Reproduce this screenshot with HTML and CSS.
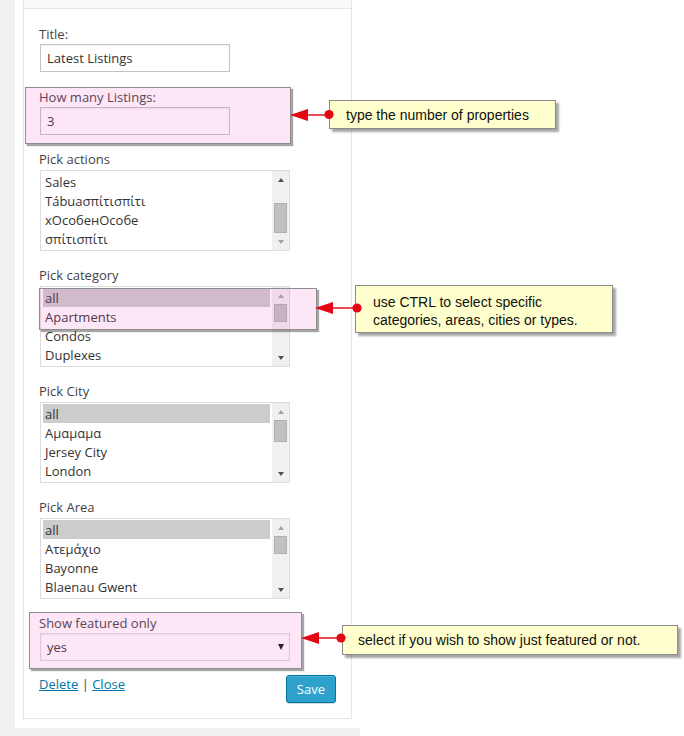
FILE: index.html
```html
<!DOCTYPE html>
<html lang="en">
<head>
<meta charset="utf-8">
<title>Latest Listings widget</title>
<link rel="stylesheet" href="styles.css">
</head>
<body>
<div class="page">
  <div class="sidebar">
    <div class="panel">
      <div class="widget">
        <div class="widget-top"></div>
        <div class="widget-inside">
          <div class="field">
            <label class="lbl">Title:</label>
            <div class="input input-short">Latest Listings</div>
          </div>
          <div class="field">
            <label class="lbl">How many Listings:</label>
            <div class="input input-short">3</div>
          </div>
          <div class="field-list">
            <label class="lbl">Pick actions</label>
            <div class="listbox">
              <div class="items">
                <div class="item">Sales</div>
                <div class="item">Tábuaσπίτισπίτι</div>
                <div class="item">xОсобенОсобе</div>
                <div class="item">σπίτισπίτι</div>
              </div>
              <div class="sb">
                <div class="sb-btn"><span class="tri-up"></span></div>
                <div class="sb-track"><div class="thumb thumb-bottom"></div></div>
                <div class="sb-btn"><span class="tri-down off"></span></div>
              </div>
            </div>
          </div>
          <div class="field-list">
            <label class="lbl">Pick category</label>
            <div class="listbox">
              <div class="items">
                <div class="item sel">all</div>
                <div class="item">Apartments</div>
                <div class="item">Condos</div>
                <div class="item">Duplexes</div>
              </div>
              <div class="sb">
                <div class="sb-btn"><span class="tri-up off"></span></div>
                <div class="sb-track"><div class="thumb thumb-s"></div></div>
                <div class="sb-btn"><span class="tri-down"></span></div>
              </div>
            </div>
          </div>
          <div class="field-list">
            <label class="lbl">Pick City</label>
            <div class="listbox">
              <div class="items">
                <div class="item sel">all</div>
                <div class="item">Αμαμαμα</div>
                <div class="item">Jersey City</div>
                <div class="item">London</div>
              </div>
              <div class="sb">
                <div class="sb-btn"><span class="tri-up off"></span></div>
                <div class="sb-track"><div class="thumb thumb-m"></div></div>
                <div class="sb-btn"><span class="tri-down"></span></div>
              </div>
            </div>
          </div>
          <div class="field-list">
            <label class="lbl">Pick Area</label>
            <div class="listbox">
              <div class="items">
                <div class="item sel">all</div>
                <div class="item">Ατεμάχιο</div>
                <div class="item">Bayonne</div>
                <div class="item">Blaenau Gwent</div>
              </div>
              <div class="sb">
                <div class="sb-btn"><span class="tri-up off"></span></div>
                <div class="sb-track"><div class="thumb thumb-s"></div></div>
                <div class="sb-btn"><span class="tri-down"></span></div>
              </div>
            </div>
          </div>
          <div class="field field-last">
            <label class="lbl">Show featured only</label>
            <div class="input select">yes<span class="caret"></span></div>
          </div>
          <div class="actions">
            <div class="links"><a href="#" class="link">Delete</a> | <a href="#" class="link">Close</a></div>
            <button class="save" type="button">Save</button>
          </div>
        </div>
      </div>
    </div>
  </div>

  <div class="hl hl-1"></div>
  <div class="hl hl-2"></div>
  <div class="hl hl-3"></div>

  <div class="note note-1">type the number of properties</div>
  <svg class="pointer ptr-1" width="48" height="20" viewBox="0 0 48 20">
    <line x1="18" y1="10" x2="41" y2="10" stroke="#e8202a" stroke-width="1.6"/>
    <polygon points="2,10 20,4 20,16" fill="#e30613"/>
    <circle cx="41" cy="9.5" r="4.6" fill="#e30613"/>
  </svg>

  <div class="note note-2">use CTRL to select specific<br>categories, areas, cities or types.</div>
  <svg class="pointer ptr-2" width="50" height="20" viewBox="0 0 50 20">
    <line x1="18" y1="10" x2="44" y2="10" stroke="#e8202a" stroke-width="1.6"/>
    <polygon points="2,10 20,4 20,16" fill="#e30613"/>
    <circle cx="44" cy="10" r="4.6" fill="#e30613"/>
  </svg>

  <div class="note note-3">select if you wish to show just featured or not.</div>
  <svg class="pointer ptr-3" width="48" height="20" viewBox="0 0 48 20">
    <line x1="18" y1="10" x2="42" y2="10" stroke="#e8202a" stroke-width="1.6"/>
    <polygon points="2,10 20,4 20,16" fill="#e30613"/>
    <circle cx="42" cy="10" r="4.6" fill="#e30613"/>
  </svg>
</div>
</body>
</html>
```

FILE: styles.css
```css
* { box-sizing: border-box; }

html, body {
  margin: 0;
  padding: 0;
  background: #ffffff;
}

.page {
  position: relative;
  width: 684px;
  height: 736px;
  overflow: hidden;
  font-family: "Open Sans", "Noto Sans", sans-serif;
  font-size: 13px;
  color: #444;
}

.sidebar {
  width: 360px;
  height: 736px;
  background: #f1f1f1;
  padding: 0 0 7px 15px;
}

.panel {
  background: #ffffff;
  padding: 0 8px 9px 8px;
}

.widget {
  border: 1px solid #e5e5e5;
  border-top: none;
  background: #fff;
}

.widget-top {
  height: 9px;
  background: #f9f9f9;
  border-bottom: 1px solid #e5e5e5;
}

.widget-inside {
  padding: 16px 15px 15px 15px;
}

.lbl {
  display: block;
  line-height: 18px;
  color: #444;
  margin-bottom: 1px;
}

.field { margin-bottom: 16px; }
.field + .field-list { margin-top: -1px; }
.field-last { margin-bottom: 0; }

.field-list { margin-bottom: 15px; }
.field-list .lbl { margin-bottom: 2px; }

.input {
  margin-left: 1px;
  height: 28px;
  border: 1px solid #c4c4c4;
  background: #fff;
  box-shadow: inset 0 1px 2px rgba(0,0,0,0.07);
  color: #333;
  line-height: 26px;
  padding-left: 6px;
}

.input-short { width: 190px; }

.select {
  width: 250px;
  position: relative;
  border-color: #dcdcdc;
  display: flex;
  align-items: center;
  justify-content: space-between;
  padding-right: 5px;
}

.caret {
  width: 0;
  height: 0;
  border-left: 3.5px solid transparent;
  border-right: 3.5px solid transparent;
  border-top: 6px solid #111;
}

.listbox {
  margin-left: 1px;
  width: 250px;
  height: 81px;
  border: 1px solid #dddddd;
  background: #fff;
  display: flex;
}

.items {
  flex: 1;
  padding: 1px 2px 0 2px;
  overflow: hidden;
}

.item {
  height: 19px;
  line-height: 20px;
  padding-left: 2px;
  color: #333;
  white-space: nowrap;
}

.item.sel { background: #cccccc; }

.sb {
  width: 17px;
  background: #f0f0f0;
  display: flex;
  flex-direction: column;
}

.sb-btn {
  height: 17px;
  display: flex;
  align-items: center;
  justify-content: center;
  padding-left: 1px;
}

.sb-track {
  flex: 1;
  padding-left: 2px;
}

.thumb {
  width: 13px;
  background: #c1c1c1;
  border: 1px solid #b0b0b0;
}

.thumb-bottom { margin-top: 15px; height: 30px; }
.thumb-s { height: 18px; }
.thumb-m { height: 22px; }

.tri-up, .tri-down {
  width: 0;
  height: 0;
  border-left: 3.5px solid transparent;
  border-right: 3.5px solid transparent;
}
.tri-up { border-bottom: 4px solid #505050; }
.tri-down { border-top: 4px solid #505050; }
.tri-up.off { border-bottom-color: #a3a3a3; }
.tri-down.off { border-top-color: #a3a3a3; }

.actions {
  margin-top: 14px;
  display: flex;
  justify-content: space-between;
  align-items: flex-start;
}

.links {
  line-height: 18px;
  color: #444;
}

.link {
  color: #0074a2;
  text-decoration: underline;
}

.save {
  height: 28px;
  padding: 0 10px;
  border: 1px solid #0074a2;
  border-radius: 3px;
  background: #2ea2cc;
  box-shadow: inset 0 1px 0 rgba(120,200,230,0.5), 0 1px 0 rgba(0,0,0,0.15);
  color: #fff;
  font-family: "Open Sans", "Noto Sans", sans-serif;
  font-size: 13px;
  line-height: 26px;
}

/* annotation overlays */
.hl {
  position: absolute;
  background: rgba(242, 88, 195, 0.15);
  border: 1px solid #8d8d8d;
  box-shadow: 2px 2px 1px rgba(0,0,0,0.35);
}
.hl-1 { left: 25px; top: 87px; width: 266px; height: 57px; }
.hl-2 { left: 39px; top: 288px; width: 278px; height: 42px; }
.hl-3 { left: 29px; top: 612px; width: 273px; height: 57px; }

.note {
  position: absolute;
  background: #ffffcd;
  border: 1px solid #8a8a8a;
  box-shadow: 3px 3px 2px rgba(0,0,0,0.35);
  font-family: "Liberation Sans", Arial, sans-serif;
  font-size: 14px;
  line-height: 18px;
  color: #111;
  white-space: nowrap;
}
.note-1 { left: 329px; top: 100px; width: 227px; height: 29px; padding: 5px 0 0 16px; }
.note-2 { left: 355px; top: 285px; width: 258px; height: 48px; padding: 7px 0 0 17px; }
.note-3 { left: 342px; top: 625px; width: 336px; height: 30px; padding: 5px 0 0 15px; }

.pointer { position: absolute; }
.ptr-1 { left: 288px; top: 105px; }
.ptr-2 { left: 313px; top: 298px; }
.ptr-3 { left: 299px; top: 628px; }
```
